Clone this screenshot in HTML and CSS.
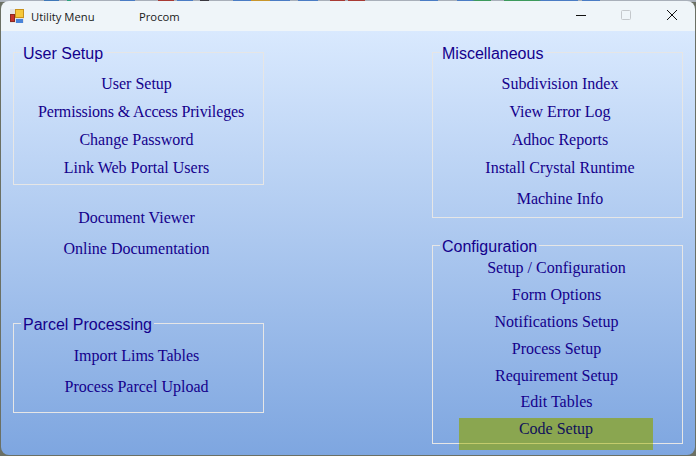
FILE: index.html
```html
<!DOCTYPE html>
<html lang="en">
<head>
<meta charset="utf-8">
<title>Utility Menu</title>
<link rel="stylesheet" href="styles.css">
</head>
<body>
<div class="window">
  <header class="titlebar">
    <svg class="app-icon" width="14" height="14" viewBox="0 0 14 14">
      <rect x="0" y="0" width="14" height="14" fill="#e4e4e4"/>
      <rect x="0.5" y="5.5" width="4" height="7" fill="#c8322b" stroke="#8c2a20" stroke-width="1"/>
      <rect x="5.5" y="0.5" width="8" height="8" fill="#f6c83a" stroke="#c9921c" stroke-width="1"/>
      <rect x="6" y="10" width="7" height="4" fill="#4a84d8"/>
    </svg>
    <span class="title">Utility Menu</span>
    <span class="title-sub">Procom</span>
    <div class="controls">
      <svg class="ctl" width="46" height="16" viewBox="0 0 46 16"><path d="M19 7.5h10" stroke="#111" stroke-width="1" fill="none"/></svg>
      <svg class="ctl" width="46" height="16" viewBox="0 0 46 16"><rect x="18.5" y="2.5" width="9" height="9" rx="1" fill="none" stroke="#c4c8cc" stroke-width="1"/></svg>
      <svg class="ctl" width="46" height="16" viewBox="0 0 46 16"><path d="M18 2l10 10M28 2l-10 10" stroke="#111" stroke-width="1" fill="none"/></svg>
    </div>
  </header>
  <main class="content">
    <div class="col">
      <fieldset class="group group-user">
        <legend>User Setup</legend>
        <a class="item">User Setup</a>
        <a class="item narrow">Permissions &amp; Access Privileges</a>
        <a class="item">Change Password</a>
        <a class="item">Link Web Portal Users</a>
      </fieldset>
      <div class="loose">
        <a class="item">Document Viewer</a>
        <a class="item tall">Online Documentation</a>
      </div>
      <fieldset class="group group-parcel">
        <legend>Parcel Processing</legend>
        <a class="item">Import Lims Tables</a>
        <a class="item tall">Process Parcel Upload</a>
      </fieldset>
    </div>
    <div class="col">
      <fieldset class="group group-misc">
        <legend>Miscellaneous</legend>
        <a class="item">Subdivision Index</a>
        <a class="item">View Error Log</a>
        <a class="item">Adhoc Reports</a>
        <a class="item">Install Crystal Runtime</a>
        <a class="item tall">Machine Info</a>
      </fieldset>
      <fieldset class="group group-config">
        <legend>Configuration</legend>
        <a class="item item-c item-first">Setup / Configuration</a>
        <a class="item item-c">Form Options</a>
        <a class="item item-c">Notifications Setup</a>
        <a class="item item-c">Process Setup</a>
        <a class="item item-c">Requirement Setup</a>
        <a class="item item-c item-edit">Edit Tables</a>
        <a class="item highlight">Code Setup</a>
      </fieldset>
    </div>
  </main>
</div>
</body>
</html>
```
FILE: styles.css
```css
* { box-sizing: border-box; }
html, body { margin: 0; height: 100%; }
body {
  overflow: hidden;
  padding: 1px;
  background-color: #6b7064;
  background-image: linear-gradient(90deg,
    #a9b0ba 44px, #3f78b8 44px, #3f78b8 59px, #a9b0ba 59px,
    #a9b0ba 67px, #2aa27c 67px, #2aa27c 71px, #a9b0ba 71px,
    #a9b0ba 120px, #4a7cc4 120px, #4a7cc4 135px, #a9b0ba 135px,
    #a9b0ba 158px, #a83a34 158px, #a83a34 174px, #a9b0ba 174px,
    #a9b0ba 177px, #4a7cc4 177px, #4a7cc4 193px, #a9b0ba 193px,
    #a9b0ba 200px, #3a3840 200px, #3a3840 209px, #a9b0ba 209px,
    #a9b0ba 233px, #4a7cc4 233px, #4a7cc4 251px, #c8962c 251px,
    #c8962c 270px, #4a7cc4 270px, #4a7cc4 290px, #a9b0ba 290px,
    #a9b0ba 298px, #4a7cc4 298px, #4a7cc4 318px, #a9b0ba 318px,
    #a9b0ba 330px, #a83a34 330px, #a83a34 345px, #a9b0ba 345px,
    #a9b0ba 348px, #a83a34 348px, #a83a34 365px, #a9b0ba 365px,
    #a9b0ba 420px, #4a7cc4 420px, #4a7cc4 438px, #a9b0ba 438px,
    #a9b0ba 457px, #4a7cc4 457px, #4a7cc4 472px, #3c9a5c 475px,
    #3c9a5c 491px, #a9b0ba 491px, #a9b0ba 504px, #3c9a5c 504px,
    #3c9a5c 539px, #4a7cc4 541px, #4a7cc4 578px, #a9b0ba 578px,
    #a9b0ba 582px, #4a7cc4 582px, #4a7cc4 600px, #a9b0ba 600px);
  background-size: 100% 2px;
  background-repeat: no-repeat;
}
.window {
  height: 454px;
  display: flex;
  flex-direction: column;
  border-radius: 8px;
  overflow: hidden;
}
.titlebar {
  height: 30px;
  flex: none;
  display: flex;
  align-items: center;
  padding-left: 9px;
  background: #eff5f9;
  font: 11.25px "Open Sans", "Liberation Sans", sans-serif;
  color: #1a1a1a;
}
.app-icon { flex: none; }
.title { margin-left: 7px; width: 108px; }
.controls { margin-left: auto; display: flex; }
.ctl { display: block; }
.content {
  flex: 1;
  display: flex;
  justify-content: space-between;
  padding: 10px 12px 0;
  background: linear-gradient(#d9e9fe, #7ea6e0);
}
.col { width: 251px; display: flex; flex-direction: column; }
.group {
  margin: 0;
  padding: 0;
  border: 1px solid #e6e6e6;
  min-width: 0;
}
legend {
  margin: 0 0 0 7px;
  padding: 4px 2px 0;
  font: 16px/18px "Liberation Sans", Arial, sans-serif;
  color: #14008c;
}
.item {
  display: block;
  height: 28px;
  font: 16px/28px "Liberation Serif", "Times New Roman", serif;
  color: #14008c;
  text-align: center;
}
.narrow { letter-spacing: -0.13px; padding-left: 9px; }
.tall { margin-top: 3px; }
.group-user { height: 144px; padding: 7px 4px 0 0; }
.loose { margin-top: 19px; padding-right: 4px; }
.group-parcel { height: 101px; margin-top: 49px; padding: 8px 4px 0 0; }
.group-misc { height: 177px; padding: 7px 0 0 5px; }
.group-misc legend { margin-left: 2px; }
.group-config { height: 210px; margin-top: 16px; padding-right: 2px; }
.item-c { height: 27px; line-height: 27px; }
.item-first { margin-top: -2px; }
.item-edit { margin-top: -1px; }
.highlight {
  position: relative;
  width: 194px;
  height: 32px;
  margin: 3px 0 0 26px;
  line-height: 22px;
  background: #8aa650;
  color: #10105a;
}
.highlight::after {
  content: "";
  position: absolute;
  left: 0;
  right: 0;
  top: 25px;
  height: 1px;
  background: #c4cc6c;
}
```
